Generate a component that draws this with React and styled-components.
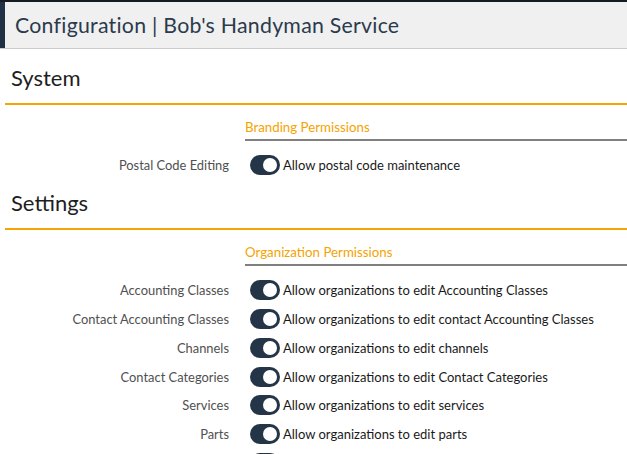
import React from 'react';
import styled, { createGlobalStyle } from 'styled-components';

const GlobalStyle = createGlobalStyle`
  html, body {
    margin: 0;
    padding: 0;
    background: #fff;
  }
  body {
    font-family: Lato, "Open Sans", sans-serif;
    color: #222;
  }
`;

const Root = styled.div`
  width: 100%;
`;

const HeaderBar = styled.header`
  border-top: 2px solid #151b22;
  border-bottom: 1px solid #cbcbcb;
  background: #f0f0f0;
`;

const HeaderInner = styled.div`
  height: 46px;
  display: flex;
  align-items: center;
  border-left: 5px solid #213145;
  padding-left: 10px;
  font-size: 21.3px;
  color: #2b3a4c;
  letter-spacing: 0.25px;
`;

const Section = styled.section`
  margin-top: ${(p) => (p.first ? '6px' : '0')};
`;

const SectionTitle = styled.h2`
  margin: 0 0 0 5px;
  padding: 10px 6px 12px;
  font-size: 22px;
  line-height: 26px;
  font-weight: 400;
  color: #1e1e1e;
  border-bottom: 2px solid #f5a500;
`;

const Group = styled.div`
  display: grid;
  grid-template-columns: 229px 1fr;
  column-gap: 16px;
`;

const GroupTitle = styled.div`
  grid-column: 2;
  margin-top: 14px;
  margin-bottom: 10px;
  padding-bottom: 4px;
  border-bottom: 2px solid #808080;
  font-size: 13.3px;
  line-height: 16px;
  color: #f5a300;
`;

const RowLabel = styled.div`
  grid-column: 1;
  height: 28.8px;
  display: flex;
  align-items: center;
  justify-content: flex-end;
  font-size: 12.9px;
  color: #505050;
  white-space: nowrap;
`;

const RowValue = styled.div`
  grid-column: 2;
  height: 28.8px;
  display: flex;
  align-items: center;
  font-size: 13px;
  color: #1a1a1a;
  white-space: nowrap;
`;

const Toggle = styled.span`
  flex: none;
  width: 30px;
  height: 20px;
  margin: 0 3px 0 5px;
  box-sizing: border-box;
  padding: 3px;
  border-radius: 10px;
  background: ${(p) => (p.on ? '#253548' : '#c4c4c4')};
  display: flex;
  justify-content: ${(p) => (p.on ? 'flex-end' : 'flex-start')};
  align-items: center;
`;

const Knob = styled.span`
  width: 14px;
  height: 14px;
  border-radius: 50%;
  background: #fff;
`;

const Switch = ({ on }) => (
  <Toggle on={on ? 1 : 0}>
    <Knob />
  </Toggle>
);

const PermissionRow = ({ label, text }) => (
  <>
    <RowLabel>{label}</RowLabel>
    <RowValue>
      <Switch on />
      {text}
    </RowValue>
  </>
);

const orgRows = [
  ['Accounting Classes', 'Allow organizations to edit Accounting Classes'],
  ['Contact Accounting Classes', 'Allow organizations to edit contact Accounting Classes'],
  ['Channels', 'Allow organizations to edit channels'],
  ['Contact Categories', 'Allow organizations to edit Contact Categories'],
  ['Services', 'Allow organizations to edit services'],
  ['Parts', 'Allow organizations to edit parts'],
  ['Products', 'Allow organizations to edit products'],
];

const App = () => (
  <Root>
    <GlobalStyle />
    <HeaderBar>
      <HeaderInner>Configuration | Bob's Handyman Service</HeaderInner>
    </HeaderBar>

    <Section first>
      <SectionTitle>System</SectionTitle>
      <Group>
        <GroupTitle>Branding Permissions</GroupTitle>
        <PermissionRow label="Postal Code Editing" text="Allow postal code maintenance" />
      </Group>
    </Section>

    <Section>
      <SectionTitle>Settings</SectionTitle>
      <Group>
        <GroupTitle>Organization Permissions</GroupTitle>
        {orgRows.map(([label, text]) => (
          <PermissionRow key={label} label={label} text={text} />
        ))}
      </Group>
    </Section>
  </Root>
);

export default App;
